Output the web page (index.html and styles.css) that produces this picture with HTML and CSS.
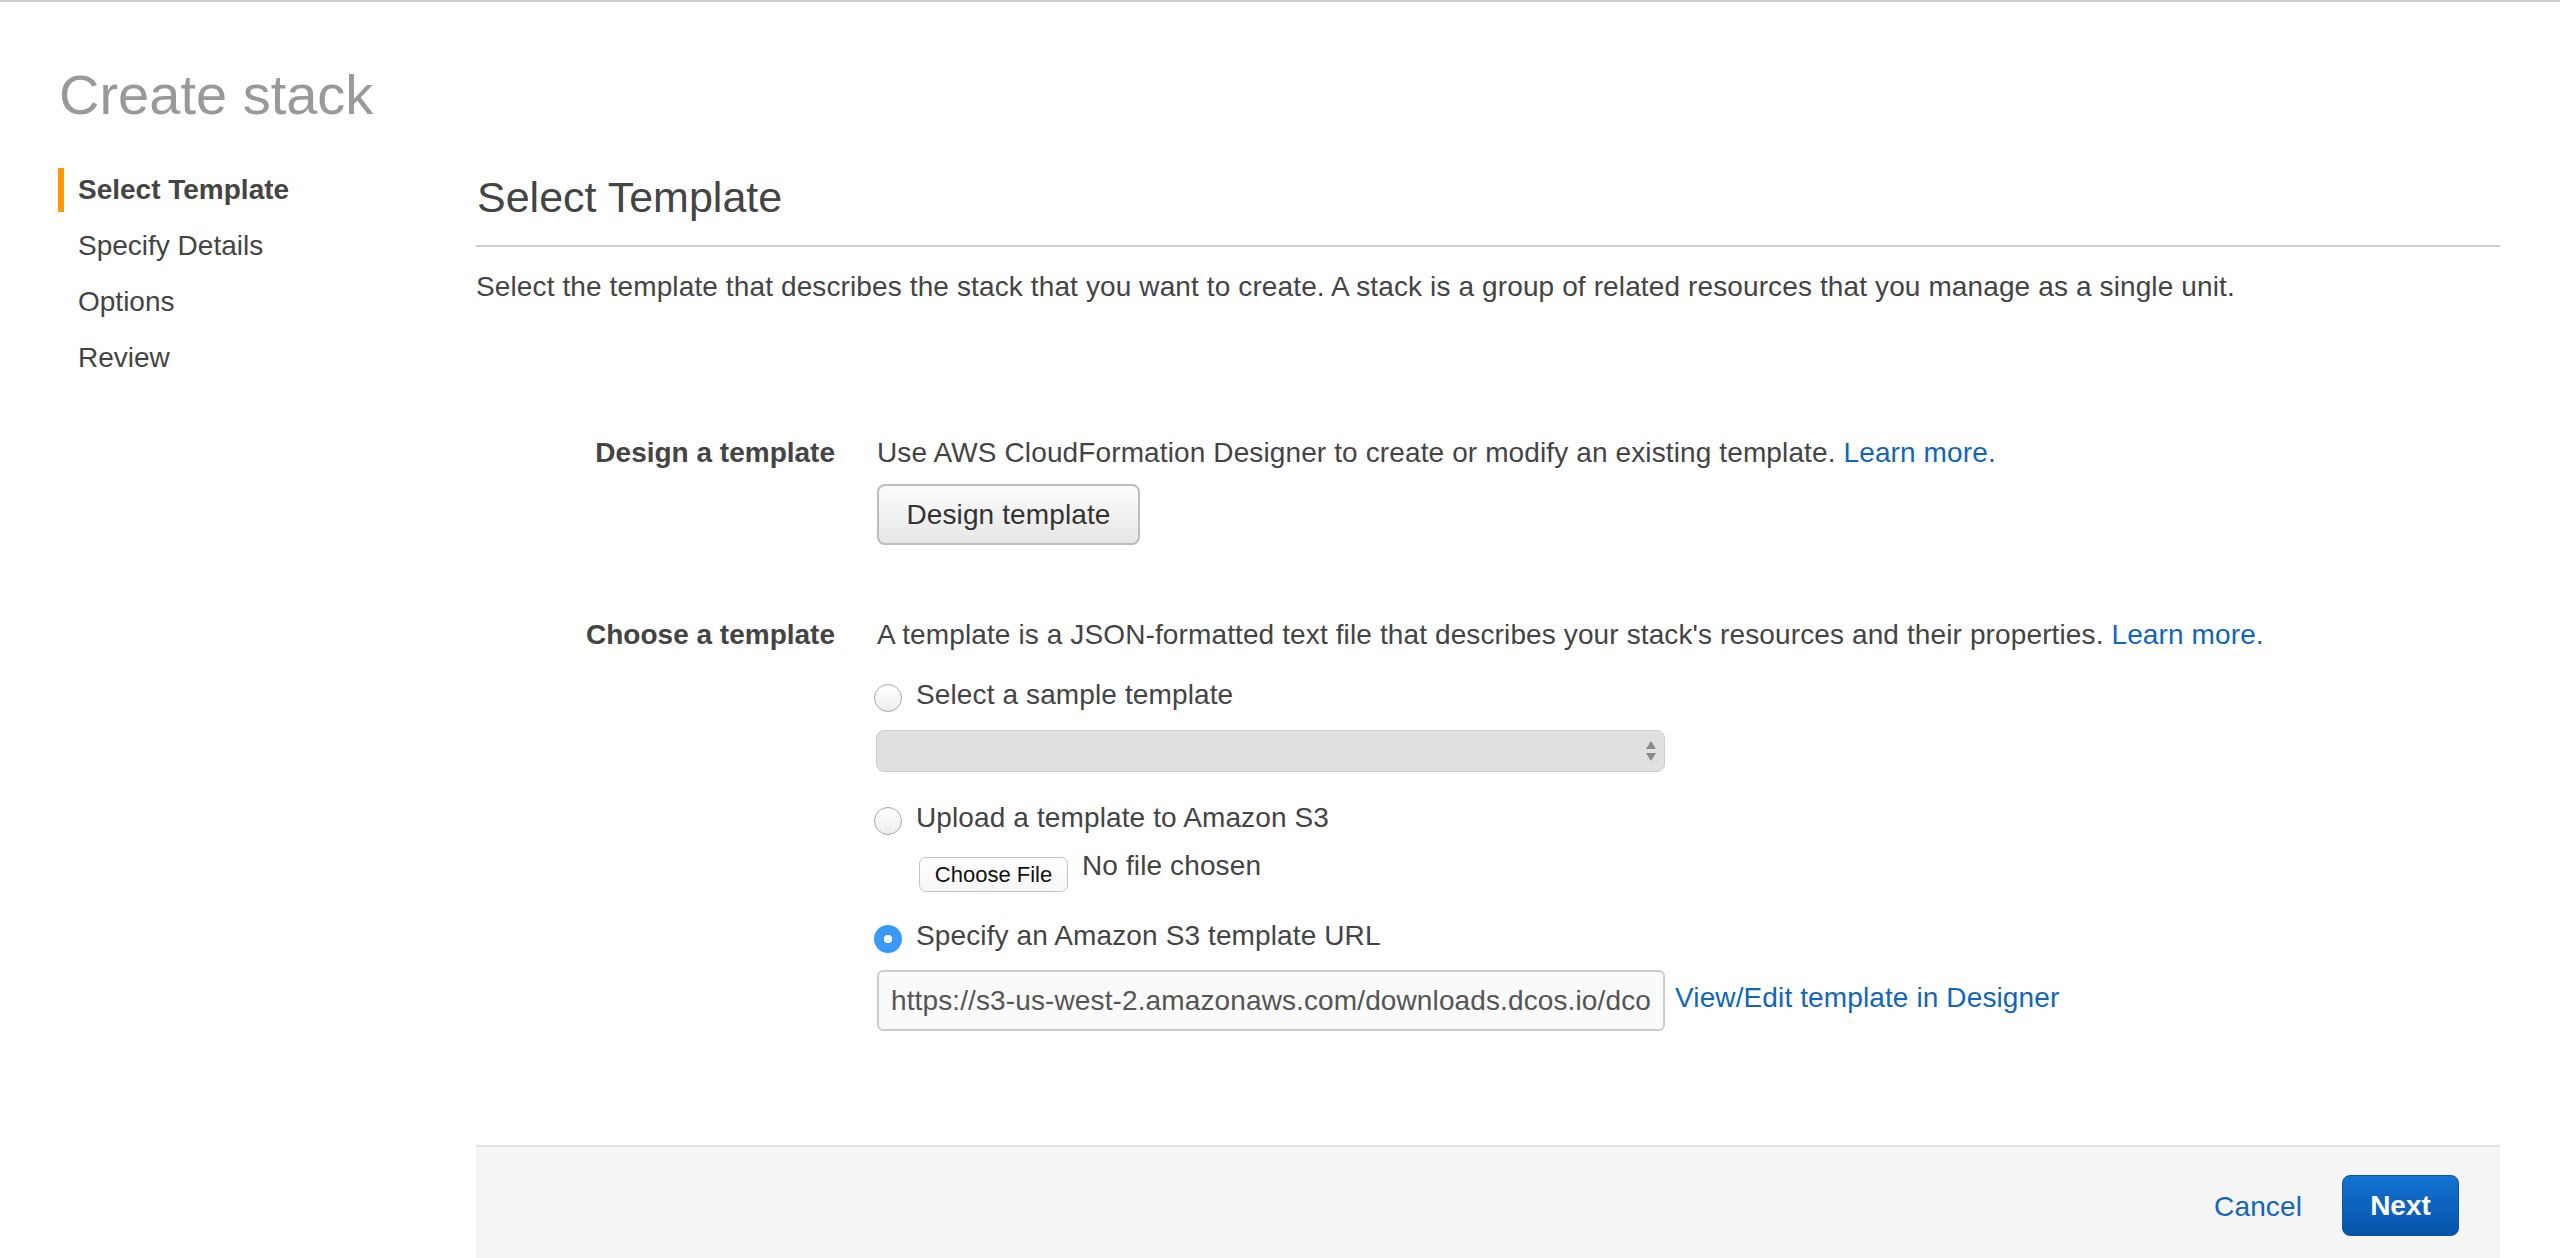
FILE: index.html
```html
<!DOCTYPE html>
<html lang="en">
<head>
<meta charset="utf-8">
<title>Create stack</title>
<link rel="stylesheet" href="styles.css">
</head>
<body>
<div class="topline"></div>
<div class="page">
  <h1 class="page-title">Create stack</h1>
  <div class="layout">
    <nav class="steps">
      <div class="step active">Select Template</div>
      <div class="step">Specify Details</div>
      <div class="step">Options</div>
      <div class="step">Review</div>
    </nav>
    <main class="main">
      <h2 class="section-title">Select Template</h2>
      <div class="rule"></div>
      <p class="intro">Select the template that describes the stack that you want to create. A stack is a group of related resources that you manage as a single unit.</p>

      <div class="form">
        <div class="label">Design a template</div>
        <div class="field">
          <div class="line">Use AWS CloudFormation Designer to create or modify an existing template. <a class="link" href="#">Learn more.</a></div>
          <button class="btn-default" type="button">Design template</button>
        </div>

        <div class="label">Choose a template</div>
        <div class="field">
          <div class="line">A template is a JSON-formatted text file that describes your stack's resources and their properties. <a class="link" href="#">Learn more.</a></div>

          <label class="radio-row first"><input type="radio" name="src" class="radio"><span>Select a sample template</span></label>
          <div class="select-box">
            <svg class="select-arrows" width="14" height="24" viewBox="0 0 14 24"><path d="M7 2 L12 10 L2 10 Z" fill="#8a8a8a"/><path d="M7 22 L12 14 L2 14 Z" fill="#8a8a8a"/></svg>
          </div>

          <label class="radio-row second"><input type="radio" name="src" class="radio"><span>Upload a template to Amazon S3</span></label>
          <div class="file-row">
            <button class="btn-file" type="button">Choose File</button>
            <span class="file-name">No file chosen</span>
          </div>

          <label class="radio-row third"><input type="radio" name="src" class="radio" checked><span>Specify an Amazon S3 template URL</span></label>
          <div class="url-row">
            <input class="url-input" type="text" value="https://s3-us-west-2.amazonaws.com/downloads.dcos.io/dcos/stable/cloudformation/single-master.cloudformation.json">
            <a class="link view-link" href="#">View/Edit template in Designer</a>
          </div>
        </div>
      </div>

      <div class="footer">
        <a class="link cancel" href="#">Cancel</a>
        <button class="btn-primary" type="button">Next</button>
      </div>
    </main>
  </div>
</div>
</body>
</html>
```

FILE: styles.css
```css
html, body {
  margin: 0;
  padding: 0;
  height: 100%;
  overflow: hidden;
  background: #ffffff;
}

body {
  font-family: "Liberation Sans", Arial, Helvetica, sans-serif;
  font-size: 28px;
  letter-spacing: 0.12px;
  color: #444444;
}

.topline {
  height: 2px;
  background: #cccccc;
}

.page {
  padding: 0 60px 0 58px;
}

.page-title {
  margin: 61px 0 0 1px;
  font-size: 56px;
  line-height: 64px;
  font-weight: normal;
  letter-spacing: 0;
  color: #999999;
}

.layout {
  display: flex;
  margin-top: 41px;
}

.steps {
  width: 418px;
  flex: none;
  display: flex;
  flex-direction: column;
  gap: 12px;
}

.step {
  height: 44px;
  line-height: 44px;
  padding-left: 14px;
  border-left: 6px solid transparent;
  color: #444444;
  letter-spacing: 0;
}

.step.active {
  border-left-color: #ff9900;
  font-weight: bold;
}

.main {
  flex: 1;
  min-width: 0;
}

.section-title {
  margin: 3px 0 0 1px;
  font-size: 43px;
  line-height: 52px;
  font-weight: normal;
  letter-spacing: 0;
  color: #444444;
}

.rule {
  margin-top: 22px;
  height: 2px;
  background: #cfcfcf;
}

.intro {
  margin: 20px 0 0 0;
  line-height: 40px;
}

.form {
  margin-top: 126px;
  display: grid;
  grid-template-columns: 359px 1fr;
  column-gap: 42px;
  row-gap: 70px;
}

.label {
  text-align: right;
  font-weight: bold;
  line-height: 40px;
  letter-spacing: 0;
  color: #444444;
}

.field {
  display: flex;
  flex-direction: column;
  align-items: flex-start;
}

.line {
  line-height: 40px;
  white-space: nowrap;
}

.link {
  color: #1166bb;
  text-decoration: none;
}

.btn-default {
  margin-top: 11px;
  width: 263px;
  height: 61px;
  border: 2px solid #bdbdbd;
  border-radius: 8px;
  background: linear-gradient(#fcfcfc, #e6e6e6);
  font-family: inherit;
  font-size: 28px;
  letter-spacing: 0.12px;
  color: #333333;
  padding: 0;
}

.radio-row {
  display: flex;
  align-items: flex-start;
  height: 40px;
  line-height: 40px;
}

.radio-row.first { margin-top: 20px; }
.radio-row.second { margin-top: 26px; }
.radio-row.third { margin-top: 25px; }

.radio {
  appearance: none;
  -webkit-appearance: none;
  box-sizing: border-box;
  width: 28px;
  height: 28px;
  margin: 9px 14px 0 -3px;
  border-radius: 50%;
  border: 1.5px solid #a8a8a8;
  background: linear-gradient(#ffffff, #eeeeee);
  flex: none;
}

.radio:checked {
  border: none;
  background: radial-gradient(circle, #ffffff 0 4px, #3b99fc 4.5px);
}

.select-box {
  box-sizing: border-box;
  margin-top: 15px;
  margin-left: -1px;
  width: 789px;
  height: 42px;
  border: 1px solid #cdcdcd;
  border-radius: 8px;
  background: #e0e0e0;
  display: flex;
  justify-content: flex-end;
  align-items: center;
  padding-right: 6px;
}

.select-arrows {
  display: block;
}

.file-row {
  margin-top: 8px;
  margin-left: 42px;
  height: 45px;
  display: flex;
  align-items: flex-start;
}

.btn-file {
  box-sizing: border-box;
  margin-top: 11px;
  width: 149px;
  height: 35px;
  border: 1px solid #c4c4c4;
  border-radius: 7px;
  background: linear-gradient(#ffffff, #f7f7f7);
  font-family: inherit;
  font-size: 22px;
  color: #111111;
  padding: 0;
}

.file-name {
  margin-left: 14px;
  line-height: 40px;
}

.url-row {
  margin-top: 14px;
  display: flex;
  align-items: center;
}

.url-input {
  box-sizing: border-box;
  width: 788px;
  height: 61px;
  border: 2px solid #cccccc;
  border-radius: 6px;
  background: #fafafa;
  font-family: inherit;
  font-size: 28px;
  letter-spacing: 0.12px;
  color: #555555;
  padding: 0 12px;
  outline: none;
}

.view-link {
  margin-left: 10px;
  margin-top: -6px;
}

.footer {
  margin-top: 114px;
  height: 114px;
  border-top: 2px solid #e3e3e3;
  background: #f5f5f5;
  display: flex;
  justify-content: flex-end;
  align-items: flex-start;
  padding: 28px 41px 0 0;
  box-sizing: content-box;
}

.cancel {
  line-height: 40px;
  margin-top: 12px;
}

.btn-primary {
  margin-left: 40px;
  width: 117px;
  height: 61px;
  border: 1px solid #0a57a6;
  border-radius: 8px;
  background: linear-gradient(#1473d3, #0653aa);
  color: #ffffff;
  font-family: inherit;
  font-size: 28px;
  font-weight: bold;
  letter-spacing: 0;
  padding: 0;
}
```
